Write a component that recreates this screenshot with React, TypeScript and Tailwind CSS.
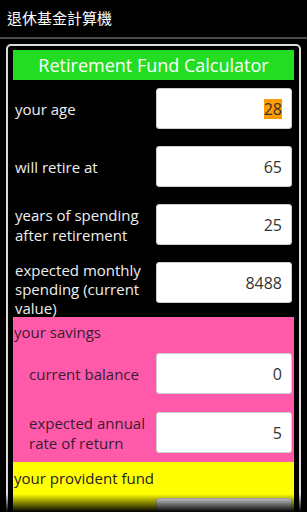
import React from "react";

const font = { fontFamily: '"Open Sans", "Noto Sans CJK TC", sans-serif' };

function Field({ value, selected }: { value: string; selected?: boolean }) {
  return (
    <div className="w-[136px] h-[41px] shrink-0 bg-white border border-[#cfcfcf] rounded-[3px] flex items-center justify-end pr-[9px] text-[16px] text-[#333]">
      {selected ? <span className="bg-[#ff9a00] leading-[20px]">{value}</span> : value}
    </div>
  );
}

function Row({
  label,
  value,
  selected,
  top,
  indent,
  dark,
}: {
  label: React.ReactNode;
  value: string;
  selected?: boolean;
  top?: boolean;
  indent?: boolean;
  dark?: boolean;
}) {
  return (
    <div className={`flex justify-between pr-[2px] ${top ? "items-start" : "items-center"}`}>
      <div
        className={`text-[15px] ${indent ? "pl-[16px]" : "pl-[2px]"} ${
          dark ? "text-[#3a1a30]" : "text-[#eeeeee]"
        } ${top ? "relative z-10 leading-[19px] -mt-[1px] -mb-[3px]" : "leading-[20px]"}`}
      >
        {label}
      </div>
      <Field value={value} selected={selected} />
    </div>
  );
}

export default function App() {
  return (
    <div className="relative w-[307px] h-[512px] overflow-hidden bg-black" style={font}>
      {/* title bar */}
      <div className="h-[37px] flex items-center pl-[7px] text-white text-[15px]">退休基金計算機</div>
      <div className="h-[2px] bg-[#4a4a4a]" />

      {/* frame */}
      <div className="mt-[5px] mx-[6px] border-2 border-[#dcdcdc] rounded-[5px] px-[5px] pt-[4px] pb-[40px]">
        <div className="h-[30px] bg-[#22dd22] flex items-center justify-center text-white text-[18px]">
          Retirement Fund Calculator
        </div>

        <div className="flex flex-col gap-[17px] pt-[8px]">
          <Row label="your age" value="28" selected />
          <Row label="will retire at" value="65" />
          <Row
            label={
              <>
                years of spending
                <br />
                after retirement
              </>
            }
            value="25"
          />
          <Row
            top
            label={
              <>
                expected monthly
                <br />
                spending (current
                <br />
                value)
              </>
            }
            value="8488"
          />
        </div>

        {/* savings */}
        <div className="mt-[2px] bg-[#ff5aaa] pt-[5px] pb-[9px]">
          <div className="text-[15px] leading-[20px] text-[#3a1a30] pl-[1px]">your savings</div>
          <div className="flex flex-col gap-[18px] pt-[11px]">
            <Row indent dark label="current balance" value="0" />
            <Row
              indent
              dark
              label={
                <>
                  expected annual
                  <br />
                  rate of return
                </>
              }
              value="5"
            />
          </div>
        </div>

        {/* provident fund */}
        <div className="bg-[#ffff00] pt-[6px] pb-[10px]">
          <div className="text-[15px] leading-[20px] text-[#222] pl-[1px]">your provident fund</div>
          <div className="pt-[10px]">
            <Row indent dark label="" value="430000" />
          </div>
        </div>
      </div>

      {/* bottom fade */}
      <div className="absolute left-0 right-0 bottom-0 h-[18px] bg-gradient-to-b from-transparent to-black" />
    </div>
  );
}
